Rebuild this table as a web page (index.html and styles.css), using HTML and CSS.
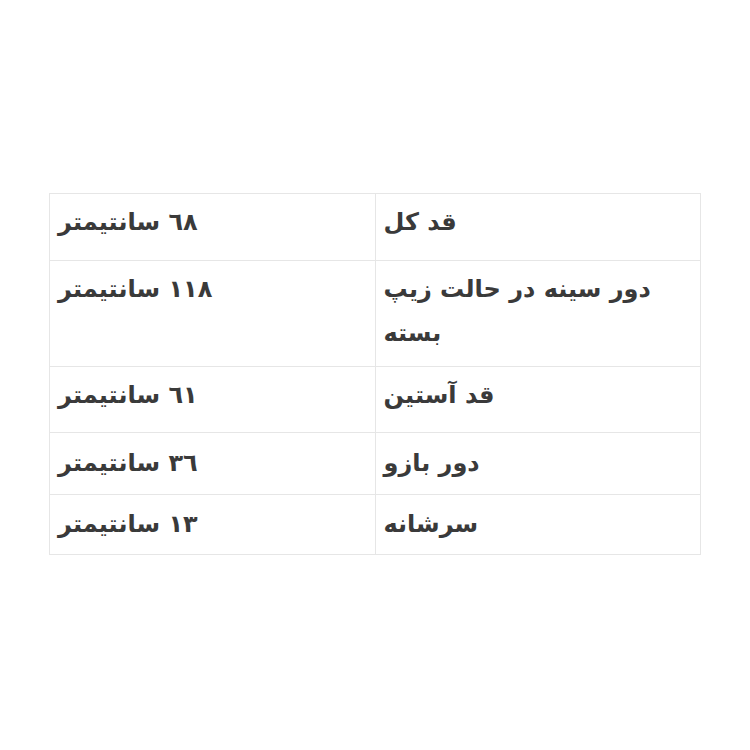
FILE: index.html
```html
<!DOCTYPE html>
<html lang="fa" dir="rtl">
<head>
<meta charset="utf-8">
<link rel="stylesheet" href="styles.css">
</head>
<body>
<div class="page">
  <table class="sizes">
    <tr class="r1"><td>قد کل</td><td>٦٨ سانتیمتر</td></tr>
    <tr class="r2"><td>دور سینه در حالت زیپ بسته</td><td>١١٨ سانتیمتر</td></tr>
    <tr class="r3"><td>قد آستین</td><td>٦١ سانتیمتر</td></tr>
    <tr class="r4"><td>دور بازو</td><td>٣٦ سانتیمتر</td></tr>
    <tr class="r5"><td>سرشانه</td><td>١٣ سانتیمتر</td></tr>
  </table>
</div>
</body>
</html>
```
FILE: styles.css
```css
html, body {
  margin: 0;
  padding: 0;
  background: #ffffff;
}
.page {
  padding: 193px 49px 0 49px;
  font-family: "DejaVu Sans", sans-serif;
  color: #3a3a3a;
}
.sizes {
  width: 652px;
  border-collapse: collapse;
  table-layout: fixed;
  font-size: 24px;
  font-weight: bold;
  line-height: 44px;
}
.sizes td {
  border: 1px solid #e6e6e6;
  padding: 6px 8px;
  text-align: left;
  vertical-align: top;
  box-sizing: border-box;
}
.r1 td { height: 67px; }
.r2 td { height: 106px; }
.r3 td { height: 66px; }
.r4 td { height: 62px; padding-top: 8px; }
.r5 td { height: 60px; padding-top: 7px; }
```
